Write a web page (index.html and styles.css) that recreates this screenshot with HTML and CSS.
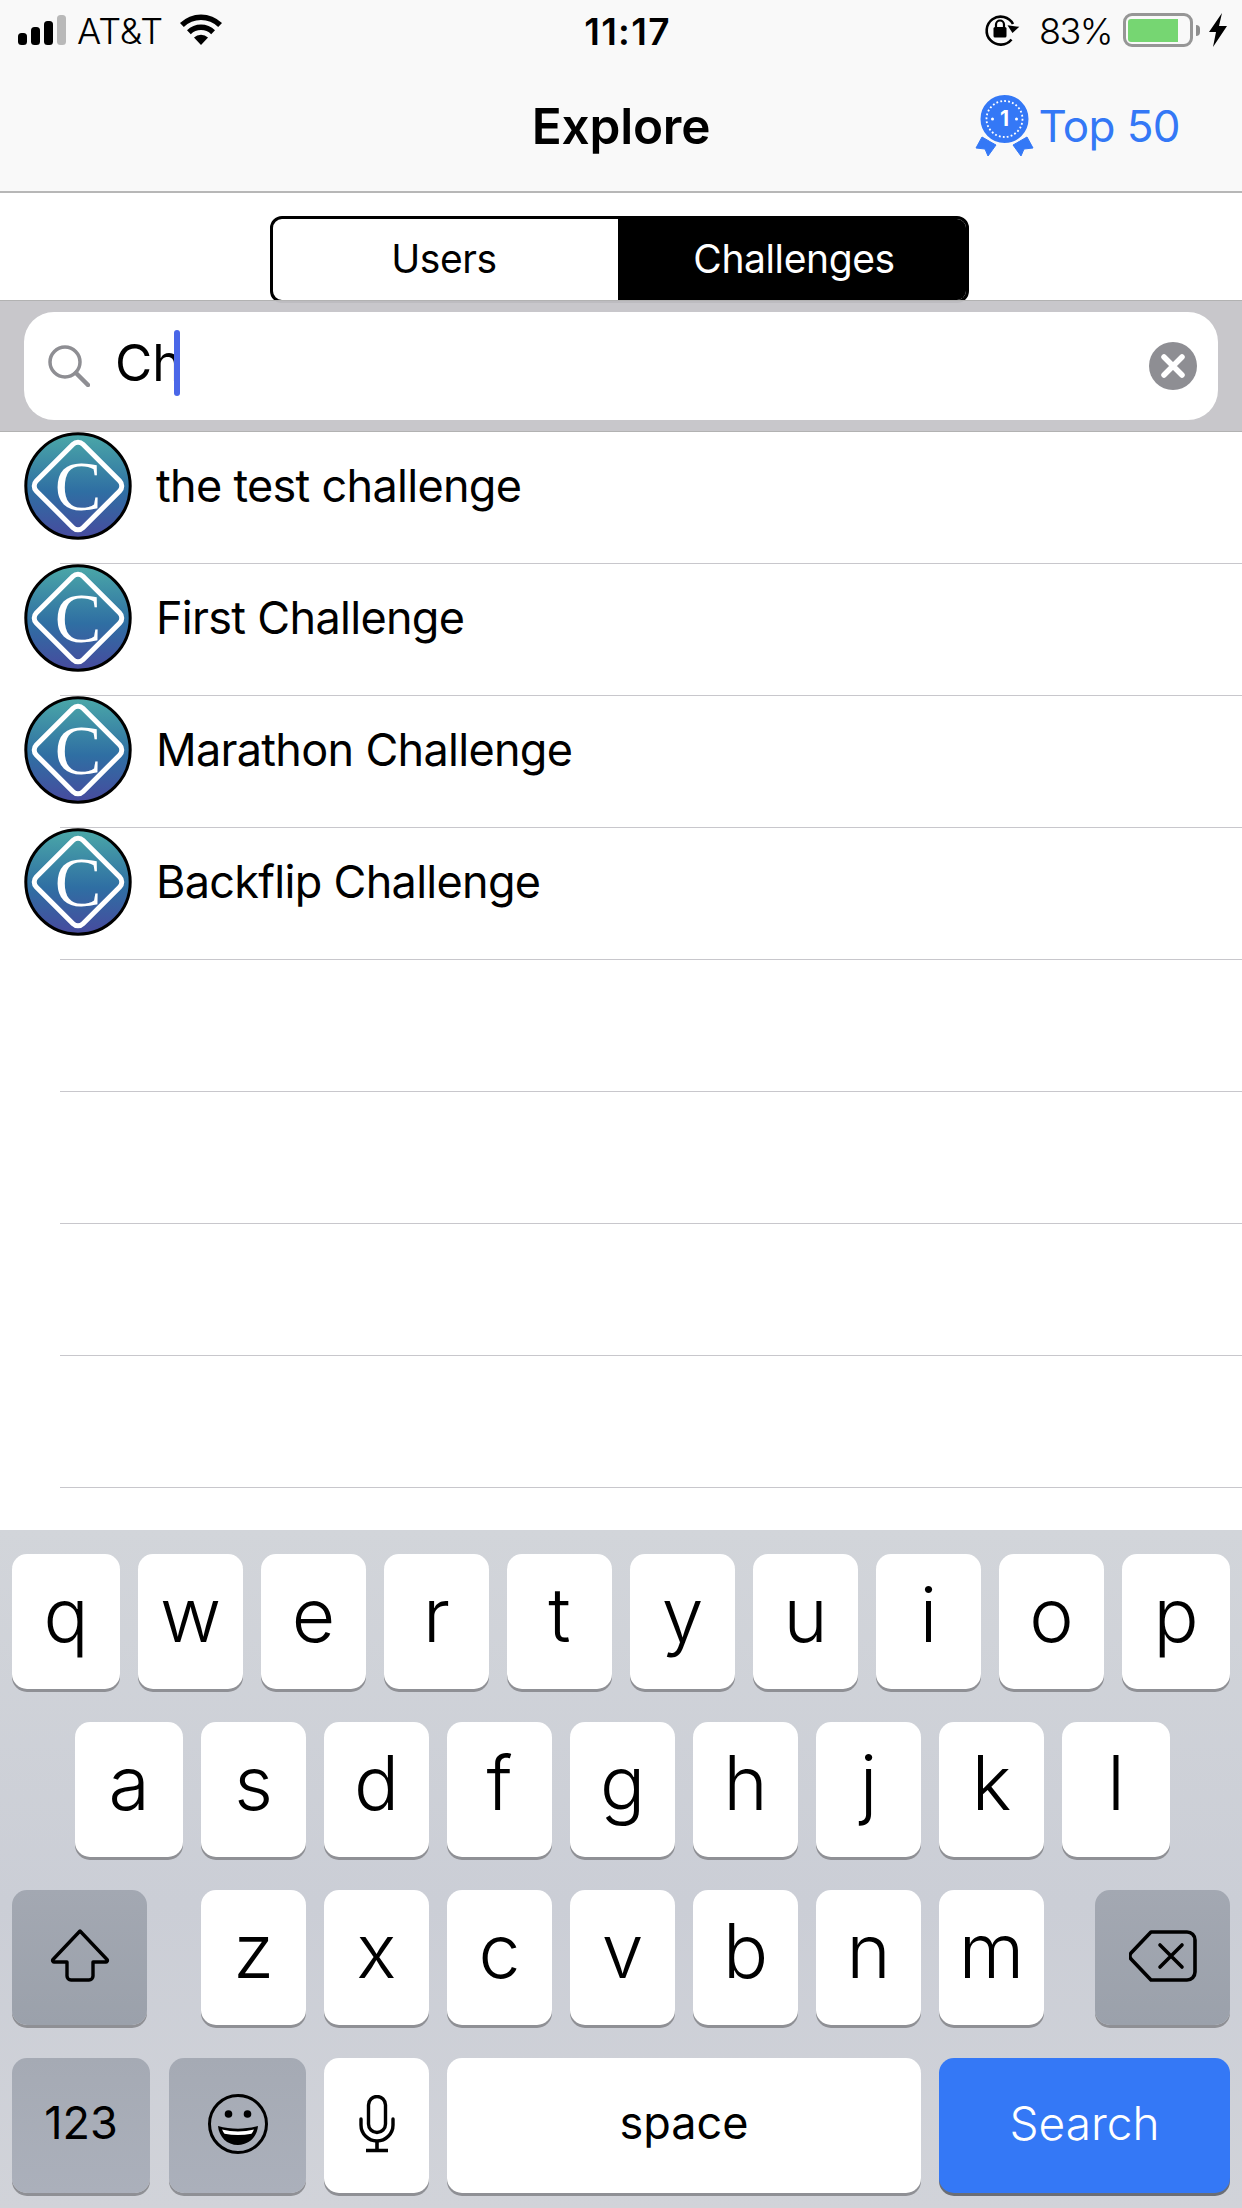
FILE: index.html
```html
<!DOCTYPE html>
<html lang="en">
<head>
<meta charset="utf-8">
<title>Explore</title>
<link rel="stylesheet" href="styles.css">
</head>
<body>
<div class="app">
  <header class="header">
    <div class="status">
      <div class="status-left">
        <svg class="signal" width="48" height="30" viewBox="0 0 48 30"><rect x="0" y="18" width="9" height="12" rx="3.500" fill="#000"/><rect x="13" y="12" width="9" height="18" rx="3.500" fill="#000"/><rect x="26" y="6" width="9" height="24" rx="3.500" fill="#000"/><rect x="39" y="0" width="9" height="30" rx="3.500" fill="#b9b9b9"/></svg>
        <span class="carrier">AT&amp;T</span>
        <svg class="wifi" width="44" height="32" viewBox="0 0 44 32"><path d="M22 31 15 23.600a10 10 0 0 1 14 0Z" fill="#000"/><path d="M11.800 20.300 8 16.300a20 20 0 0 1 28 0l-3.800 4a14.500 14.500 0 0 0-20.400 0Z" fill="#000"/><path d="M4.800 13 1 9a30 30 0 0 1 42 0l-3.800 4a24.500 24.500 0 0 0-34.400 0Z" fill="#000"/></svg>
      </div>
      <div class="time">11:17</div>
      <div class="status-right">
        <svg class="rotlock" width="36" height="34" viewBox="0 0 36 34"><path d="M27.500 26.500A14 14 0 1 1 29 11" fill="none" stroke="#000" stroke-width="2.600"/><path d="M23 13h12l-6 7Z" fill="#000" transform="rotate(8 29 16)"/><rect x="9.500" y="14" width="13" height="10.500" rx="1.500" fill="#000"/><path d="M12 14v-2.500a4 4 0 0 1 8 0V14" fill="none" stroke="#000" stroke-width="2.200"/></svg>
        <span class="battery-pct">83%</span>
        <span class="battery"><span class="battery-fill"></span></span>
        <span class="battery-cap"></span>
        <svg class="bolt" width="18" height="34" viewBox="0 0 18 34"><path d="M13 0 0 19h7L4 34 18 13h-8Z" fill="#000"/></svg>
      </div>
    </div>
    <nav class="nav">
      <div></div>
      <h1 class="nav-title">Explore</h1>
      <div class="nav-action">
        <svg class="medal" width="60" height="64" viewBox="0 0 60 64">
          <path d="M7 43 21 51 13 62 10 55 1 54Z" fill="#3478f6" stroke="#3478f6" stroke-width="1" stroke-linejoin="round"/>
          <path d="M52 43 38 51 46 62 49 55 58 54Z" fill="#3478f6" stroke="#3478f6" stroke-width="1" stroke-linejoin="round"/>
          <circle cx="29.500" cy="25" r="25" fill="#3478f6" stroke="#f9f9f9" stroke-width="2"/>
          <circle cx="29.500" cy="25" r="18" fill="none" stroke="#fff" stroke-width="1.800" stroke-dasharray="1.800 2.200"/>
          <circle cx="17.500" cy="25" r="1.500" fill="#fff"/>
          <circle cx="41.500" cy="25" r="1.500" fill="#fff"/>
          <text x="29.500" y="32" class="medal-num" text-anchor="middle">1</text>
        </svg>
        <span class="nav-link">Top 50</span>
      </div>
    </nav>
  </header>

  <section class="seg-wrap">
    <div class="seg">
      <div class="seg-item seg-users">Users</div>
      <div class="seg-item seg-active">Challenges</div>
    </div>
  </section>

  <section class="searchbar">
    <div class="field">
      <svg class="mag" width="42" height="42" viewBox="0 0 42 42"><circle cx="17" cy="17" r="15" fill="none" stroke="#8e8e93" stroke-width="3.500"/><path d="M28 28 40 40" stroke="#8e8e93" stroke-width="4.500" stroke-linecap="round"/></svg>
      <span class="query">Ch</span><span class="caret"></span>
      <svg class="clear" width="48" height="48" viewBox="0 0 48 48"><circle cx="24" cy="24" r="24" fill="#8e8e93"/><path d="M15 15l18 18M33 15 15 33" stroke="#fff" stroke-width="5.500" stroke-linecap="round"/></svg>
    </div>
  </section>

  <main class="list">
    <div class="row">
      <svg class="avatar" width="108" height="108" viewBox="0 0 108 108"><defs><linearGradient id="av" x1="0" y1="0" x2="0" y2="1"><stop offset="0" stop-color="#4ba8a8"/><stop offset=".55" stop-color="#2f6fa3"/><stop offset="1" stop-color="#474a9e"/></linearGradient></defs><circle cx="54" cy="54" r="52.200" fill="url(#av)" stroke="#000" stroke-width="3"/><rect x="21" y="21" width="66" height="66" rx="7" fill="none" stroke="#fff" stroke-width="5" transform="rotate(45 54 54)"/><text x="54" y="78" class="avatar-c" text-anchor="middle">C</text></svg>
      <span class="row-text">the test challenge</span>
    </div>
    <div class="row">
      <svg class="avatar" width="108" height="108" viewBox="0 0 108 108"><circle cx="54" cy="54" r="52.200" fill="url(#av)" stroke="#000" stroke-width="3"/><rect x="21" y="21" width="66" height="66" rx="7" fill="none" stroke="#fff" stroke-width="5" transform="rotate(45 54 54)"/><text x="54" y="78" class="avatar-c" text-anchor="middle">C</text></svg>
      <span class="row-text">First Challenge</span>
    </div>
    <div class="row">
      <svg class="avatar" width="108" height="108" viewBox="0 0 108 108"><circle cx="54" cy="54" r="52.200" fill="url(#av)" stroke="#000" stroke-width="3"/><rect x="21" y="21" width="66" height="66" rx="7" fill="none" stroke="#fff" stroke-width="5" transform="rotate(45 54 54)"/><text x="54" y="78" class="avatar-c" text-anchor="middle">C</text></svg>
      <span class="row-text">Marathon Challenge</span>
    </div>
    <div class="row">
      <svg class="avatar" width="108" height="108" viewBox="0 0 108 108"><circle cx="54" cy="54" r="52.200" fill="url(#av)" stroke="#000" stroke-width="3"/><rect x="21" y="21" width="66" height="66" rx="7" fill="none" stroke="#fff" stroke-width="5" transform="rotate(45 54 54)"/><text x="54" y="78" class="avatar-c" text-anchor="middle">C</text></svg>
      <span class="row-text">Backflip Challenge</span>
    </div>
    <div class="row"></div>
    <div class="row"></div>
    <div class="row"></div>
    <div class="row"></div>
  </main>

  <section class="kbd">
    <div class="kb-row kb-row1">
      <div class="key key-edge">q</div><div class="key">w</div><div class="key">e</div><div class="key">r</div><div class="key">t</div><div class="key">y</div><div class="key">u</div><div class="key">i</div><div class="key">o</div><div class="key key-edge">p</div>
    </div>
    <div class="kb-row kb-row2">
      <div class="key key-edge">a</div><div class="key">s</div><div class="key">d</div><div class="key">f</div><div class="key">g</div><div class="key">h</div><div class="key">j</div><div class="key">k</div><div class="key key-edge">l</div>
    </div>
    <div class="kb-row kb-row3">
      <div class="key key-dark key-shift">
        <svg width="60" height="54" viewBox="0 0 60 54"><path d="M30 2 3 30.500a1.500 1.500 0 0 0 1 2.500h13v14a4 4 0 0 0 4 4h18a4 4 0 0 0 4-4V33h13a1.500 1.500 0 0 0 1-2.500Z" fill="none" stroke="#000" stroke-width="3.400" stroke-linejoin="round"/></svg>
      </div>
      <div class="kb-letters">
        <div class="key">z</div><div class="key">x</div><div class="key">c</div><div class="key">v</div><div class="key">b</div><div class="key">n</div><div class="key">m</div>
      </div>
      <div class="key key-dark key-shift">
        <svg width="68" height="52" viewBox="0 0 68 52"><path d="M22 2h36a8 8 0 0 1 8 8v32a8 8 0 0 1-8 8H22L2 29a5 5 0 0 1 0-6Z" fill="none" stroke="#000" stroke-width="3.600" stroke-linejoin="round"/><path d="M31 15l22 22M53 15 31 37" stroke="#000" stroke-width="3.600" stroke-linecap="round"/></svg>
      </div>
    </div>
    <div class="kb-row kb-row4">
      <div class="key key-dark key-word key-num">123</div>
      <div class="key key-dark key-emoji">
        <svg width="62" height="62" viewBox="0 0 62 62"><circle cx="31" cy="31" r="28.500" fill="none" stroke="#000" stroke-width="3"/><circle cx="21.500" cy="21" r="3.800" fill="#000"/><circle cx="40.500" cy="21" r="3.800" fill="#000"/><path d="M11 33c13 3.500 27 3.500 40 0-1 11-9 19-20 19S12 44 11 33Z" fill="#000"/><path d="M15 36.500c10.500 2.500 21.500 2.500 32 0-1 2-1.500 3-2.500 4.200-9 1.800-18 1.800-27 0-1-1.200-1.500-2.200-2.500-4.200Z" fill="#fff"/></svg>
      </div>
      <div class="key key-mic">
        <svg width="36" height="58" viewBox="0 0 36 58"><rect x="9.500" y="1.500" width="17" height="36" rx="8.500" fill="none" stroke="#000" stroke-width="3.400"/><path d="M2 24v6a16 16 0 0 0 32 0v-6" fill="none" stroke="#000" stroke-width="3.400" stroke-linecap="round"/><path d="M18 46v9M7 55.500h22" stroke="#000" stroke-width="3.600"/></svg>
      </div>
      <div class="key key-word key-space">space</div>
      <div class="key key-word key-search">Search</div>
    </div>
  </section>
</div>
</body>
</html>
```

FILE: styles.css
```css
* { box-sizing: border-box; }
html, body { margin: 0; padding: 0; background: #fff; }
body { font-family: Inter, "Liberation Sans", sans-serif; color: #000; }
.app { width: 1242px; height: 2208px; display: flex; flex-direction: column; overflow: hidden; }

.header { background: #f9f9f9; border-bottom: 2px solid #b7b7b7; height: 193px; flex: none; }
.status { height: 60px; display: grid; grid-template-columns: 1fr auto 1fr; align-items: center; padding: 0 15px 0 18px; font-size: 36px; }
.status-left { display: flex; align-items: center; gap: 11px; }
.carrier { font-weight: 350; margin-right: 5px; padding-top: 2px; }
.time { font-weight: 600; font-size: 37px; letter-spacing: 1.300px; padding: 2px 0 0 10px; }
.status-right { display: flex; align-items: center; justify-content: flex-end; }
.rotlock { margin-right: 19px; }
.battery-pct { margin-right: 11px; font-weight: 350; letter-spacing: -1.500px; padding-top: 2px; }
.battery { width: 70px; height: 34px; border: 3.500px solid #969696; border-radius: 9px; padding: 2.500px 2px; display: block; }
.battery-fill { display: block; width: 50px; height: 100%; background: #76d672; border-radius: 3px 0 0 3px; }
.battery-cap { width: 4px; height: 11px; background: #8e8e8e; border-radius: 0 4px 4px 0; margin: 0 9px 0 3px; }

.nav { height: 131px; display: grid; grid-template-columns: 1fr auto 1fr; align-items: center; }
.nav-title { margin: 0; font-size: 49.500px; font-weight: 600; letter-spacing: -0.2px; }
.nav-action { display: flex; align-items: center; justify-content: flex-end; padding-right: 62px; gap: 3px; }
.nav-link { color: #3478f6; font-size: 44px; font-weight: 400; letter-spacing: -0.6px; }
.medal-num { font-family: Inter, "Liberation Sans", sans-serif; font-size: 21px; font-weight: 700; fill: #fff; }

.seg-wrap { height: 107px; flex: none; display: flex; justify-content: center; padding: 23px 3px 0 0; background: #fff; }
.seg { width: 699px; height: 87px; border: 3px solid #000; border-radius: 12px; display: grid; grid-template-columns: 345px 1fr; overflow: hidden; }
.seg-item { display: flex; align-items: center; justify-content: center; font-size: 39px; font-weight: 380; letter-spacing: -0.4px; padding-bottom: 2px; }
.seg-users { padding-right: 3px; }
.seg-active { background: #000; color: #fff; padding-left: 4px; }

.searchbar { height: 132px; flex: none; background: rgba(197, 196, 201, 0.957); padding: 11px 24px; position: relative; border-top: 1px solid #b2b2b2; border-bottom: 1px solid #b2b2b2; }
.field { height: 108px; background: #fff; border-radius: 30px; display: flex; align-items: center; padding: 0 21px 0 24px; }
.mag { margin-right: 25px; }
.query { font-size: 51px; font-weight: 380; padding-bottom: 8px; }
.caret { width: 6px; height: 66px; background: #4a67e8; border-radius: 3px; margin: 0 0 6px -8px; }
.clear { margin-left: auto; }

.list { flex: 1; min-height: 0; overflow: hidden; }
.row { height: 132px; position: relative; display: flex; align-items: flex-start; padding-left: 24px; }
.row::after { content: ""; position: absolute; left: 60px; right: 0; bottom: 0; height: 1px; background: #c8c7cc; }
.avatar { position: relative; z-index: 1; }
.row-text { font-size: 45px; font-weight: 380; margin-left: 24px; line-height: 108px; letter-spacing: -0.700px; }
.avatar-c { font-family: "Liberation Serif", serif; font-size: 70px; fill: #fff; }

.kbd { height: 678px; flex: none; padding-top: 24px; background: linear-gradient(180deg, #d2d5da 0%, #cbced6 55%, #d1d3d9 100%); display: flex; flex-direction: column; gap: 33px; }
.kb-row { display: flex; gap: 18px; height: 135px; }
.kb-row1 { padding: 0 12px; }
.kb-row2 { padding: 0 72px 0 75px; }
.kb-row3 { padding: 0 12px; gap: 0; }
.kb-letters { display: flex; gap: 18px; margin: 0 auto 0 54px; }
.kb-row4 { padding: 0 12px; }
.key { width: 105px; height: 135px; background: #fff; border-radius: 15px; box-shadow: 0 3px 0 #8f9095; display: flex; align-items: center; justify-content: center; font-size: 75px; font-weight: 300; padding-bottom: 14px; flex: none; }
.key-edge { width: 108px; }
.key-dark { background: linear-gradient(180deg, #a3a8b2, #9ba1ab); padding-bottom: 4px; }
.key-mic { padding-bottom: 4px; }
.key-word { font-size: 45px; font-weight: 400; padding-bottom: 6px; }
.key-shift { width: 135px; }
.key-num { width: 138px; margin-right: 1px; background: linear-gradient(180deg, #a5aab4, #abb0bb); }
.key-emoji { width: 137px; background: linear-gradient(180deg, #a5aab4, #abb0bb); }
.key-space { width: 474px; }
.key-search { width: 291px; background: #3478f6; color: #fff; font-size: 46px; font-weight: 350; box-shadow: 0 3px 0 #6b6e75; }
```
